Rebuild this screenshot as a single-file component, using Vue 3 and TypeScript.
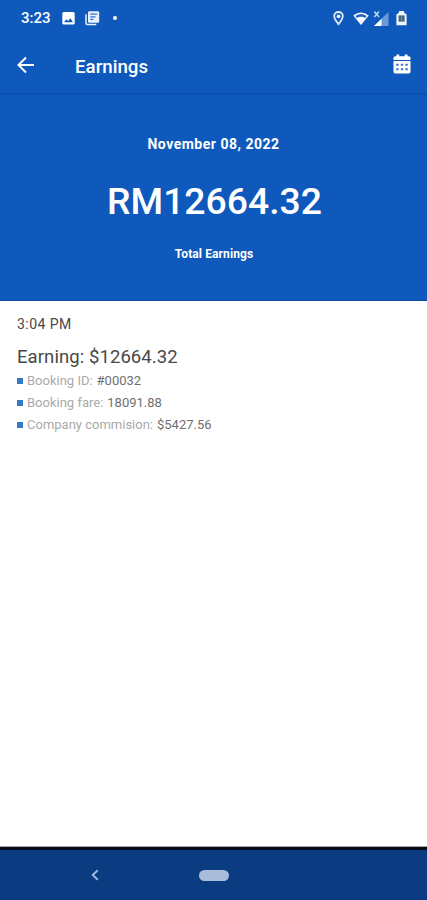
<script setup lang="ts">
interface Detail {
  label: string
  value: string
}

const details: Detail[] = [
  { label: 'Booking ID:', value: '#00032' },
  { label: 'Booking fare:', value: '18091.88' },
  { label: 'Company commision:', value: '$5427.56' },
]
</script>

<template>
  <div class="screen">
    <div class="status">
      <span class="clock">3:23</span>
      <svg class="photo" width="13" height="13" viewBox="0 0 13 13">
        <rect x="0.3" y="0.1" width="12.4" height="12.4" rx="1.5" fill="#fff" />
        <path d="M2 10.2 4.4 7.2 6.1 9.1 8.3 6.2 11 10.2Z" fill="#0f59bd" />
      </svg>
      <svg class="news" width="15" height="15" viewBox="0 0 15 15">
        <path d="M1 3.2V12Q1 13.500 2.500 13.500H11.300" fill="none" stroke="#e8f1ff" stroke-width="1.500" />
        <rect x="3" y="0.3" width="11.200" height="11.500" rx="1.300" fill="#e8f1ff" />
        <path d="M5.200 3.200H12.300M5.200 5.800H10.500M5.200 8.400H8.500" stroke="#3975c8" stroke-width="1.200" />
      </svg>
      <i class="dot"></i>
      <span class="grow"></span>
      <svg class="pin" width="11" height="15" viewBox="0 0 11 15">
        <path d="M5.5 1C3 1 1.200 2.800 1.200 5.100c0 3 4.300 8 4.300 8s4.300-5 4.300-8C9.800 2.800 8 1 5.500 1Z" fill="none" stroke="#e0ecfc" stroke-width="1.800" />
        <circle cx="5.5" cy="5.3" r="1.900" fill="#e8f1ff" />
      </svg>
      <svg class="wifi" width="16" height="14" viewBox="0 0 16 14">
        <path d="M.3 3.500Q8 -2.500 15.700 3.500L8 13Z" fill="#fff" />
        <path d="M2.400 4.100Q8 0 13.600 4.100L12.200 5.900Q8 3.700 3.800 5.900Z" fill="#2565c2" />
      </svg>
      <svg class="signal" width="16" height="16" viewBox="0 0 16 16">
        <path d="M15.500 1V15H1Z" fill="#6b9ada" />
        <path d="M8.500 7.800V15H1Z" fill="#fff" />
        <path d="M1.300.5 6 6M6 .5 1.300 6" stroke="#c8ddf8" stroke-width="1.400" />
      </svg>
      <svg class="battery" width="11" height="15" viewBox="0 0 11 15">
        <path d="M3 0H8V1.600L10.600 3.600V14.200H.4V3.600L3 1.600Z" fill="#f2f6f8" />
        <path d="M2.600 4.400H8.600V10.600H2.600Z" fill="#42617c" />
        <path d="M5.600 4.400V10.600" stroke="#8ba2b4" stroke-width=".8" />
      </svg>
    </div>

    <header class="bar">
      <svg class="back" width="18" height="18" viewBox="0 0 18 18">
        <path d="M17 9H2M9 1.500 1.500 9 9 16.500" fill="none" stroke="#fff" stroke-width="2" />
      </svg>
      <h1 class="title">Earnings</h1>
      <svg class="calendar" width="18" height="20" viewBox="0 0 18 20">
        <path d="M.5 6V4Q.5 2.300 2.200 2.300H3.500V.4H6.200V2.300H11.800V.4H14.500V2.300H15.800Q17.500 2.300 17.500 4V6Z" fill="#fff" />
        <path d="M.5 7H17.500V17.700Q17.500 19.500 15.700 19.500H2.300Q.5 19.500 .5 17.700Z" fill="#fff" />
        <path d="M3.200 10.700H5.600M7.800 10.700H10.200M12.400 10.700H14.800M3.200 15.300H5.600M7.800 15.300H10.200M12.400 15.300H14.800" stroke="#3976c8" stroke-width="1.900" />
      </svg>
    </header>

    <section class="hero">
      <span class="date">November 08, 2022</span>
      <strong class="amount">RM12664.32</strong>
      <span class="caption">Total Earnings</span>
    </section>

    <main class="list">
      <div class="time">3:04 PM</div>
      <div class="earning">Earning: $12664.32</div>
      <div v-for="d in details" :key="d.label" class="row">
        <i class="bullet"></i>
        <span class="label">{{ d.label }}</span>
        <span class="value">{{ d.value }}</span>
      </div>
    </main>

    <nav class="nav">
      <svg class="chevron" width="8" height="12" viewBox="0 0 8 12">
        <path d="M6.700 1.200 1.700 6 6.700 10.800" fill="none" stroke="#9db8de" stroke-width="1.900" />
      </svg>
      <i class="pill"></i>
    </nav>
  </div>
</template>

<style>
body {
  margin: 0;
}
</style>

<style scoped>
.screen {
  display: flex;
  flex-direction: column;
  width: 427px;
  height: 900px;
  overflow: hidden;
  background: #fff;
  font-family: Roboto, "Liberation Sans", sans-serif;
  color: #fff;
}
.screen svg {
  display: block;
  flex: none;
}
.status {
  display: flex;
  align-items: center;
  box-sizing: border-box;
  height: 37px;
  padding: 0 20px 0 21px;
  background: #0f59bd;
}
.clock {
  width: 41px;
  font-size: 15px;
  font-weight: 500;
  line-height: 37px;
}
.news {
  margin-left: 10px;
}
.dot {
  width: 4px;
  height: 4px;
  margin: 0 0 2px 13px;
  border-radius: 50%;
  background: #fff;
}
.grow {
  flex: 1;
}
.wifi {
  margin-left: 9px;
}
.signal {
  margin-left: 4px;
}
.battery {
  margin-left: 7px;
}
.bar {
  display: flex;
  align-items: center;
  box-sizing: border-box;
  height: 58px;
  padding: 0 16px 2px 17px;
  border-bottom: 2px solid #0c4fad;
  background: #0f59bd;
}
.back {
  margin-top: 1px;
}
.calendar {
  margin-bottom: 1px;
}
.title {
  flex: 1;
  margin: 6px 0 0 40px;
  font-size: 18.7px;
  font-weight: 500;
  line-height: 24px;
}
.hero {
  display: flex;
  flex-direction: column;
  align-items: center;
  box-sizing: border-box;
  height: 206px;
  padding-top: 39px;
  border-bottom: 1px solid #0a48a0;
  background: #0f59bd;
}
.date {
  font-size: 14px;
  font-weight: 700;
  line-height: 20px;
  letter-spacing: 0.5px;
}
.amount {
  margin: 25px 0 0 2px;
  font-size: 37.3px;
  font-weight: 500;
  line-height: 44px;
}
.caption {
  margin: 22px 0 0 1px;
  font-size: 12px;
  font-weight: 700;
  line-height: 18px;
  letter-spacing: 0.1px;
}
.list {
  flex: 1;
  padding: 13px 17px 0;
}
.time {
  font-size: 14px;
  line-height: 20px;
  letter-spacing: 0.45px;
  color: #484848;
}
.earning {
  margin-top: 11px;
  font-size: 18.5px;
  line-height: 24px;
  letter-spacing: 0.08px;
  color: #484848;
}
.row {
  display: flex;
  align-items: center;
  height: 22px;
  font-size: 13px;
  line-height: 22px;
  white-space: nowrap;
}
.earning + .row {
  margin-top: 1px;
}
.bullet {
  width: 6px;
  height: 6px;
  margin-right: 4px;
  background: #347bc7;
}
.label {
  margin-right: 4px;
  color: #aaa;
}
.value {
  color: #707070;
}
.nav {
  display: flex;
  align-items: center;
  box-sizing: border-box;
  height: 54px;
  padding-left: 91px;
  border-top: 1px solid #aaa;
  box-shadow: inset 0 3px #050b17;
  background: #0b3c82;
}
.chevron {
  margin-top: 3px;
}
.pill {
  width: 30px;
  height: 11px;
  margin: 3px 0 0 100px;
  border-radius: 6px;
  background: #a9bddb;
}
</style>
